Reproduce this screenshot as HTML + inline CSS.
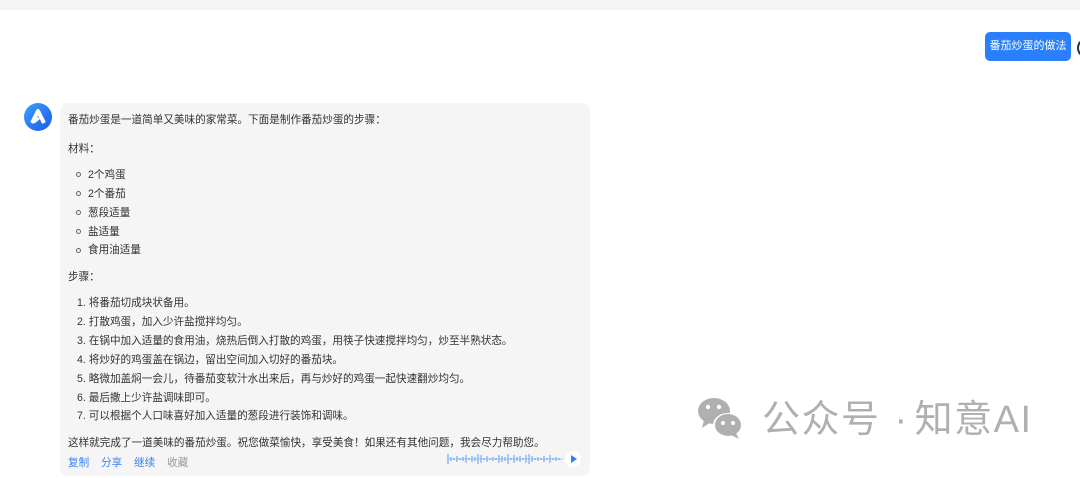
<!DOCTYPE html>
<html><head><meta charset="utf-8"><style>
body{margin:0;width:1080px;height:478px;background:#fff;position:relative;overflow:hidden;font-family:"Liberation Sans","Noto Sans CJK SC",sans-serif;color:#333}
.top{position:absolute;left:0;top:0;width:1080px;height:10px;background:#f5f5f5}
.ub{position:absolute;left:985px;top:32px;width:86px;height:29px;background:#2a7ffc;border-radius:5px;color:#fff;font-size:11px;line-height:29px;text-align:center}
.ua{position:absolute;left:1077px;top:38px;width:16px;height:16px;border-radius:50%;border:2px solid #234}
.av{position:absolute;left:24px;top:103px;width:28px;height:28px;border-radius:50%;background:linear-gradient(135deg,#3aa0ff,#1a5ae8)}
.bb{position:absolute;left:60px;top:103px;width:530px;height:373px;background:#f5f5f5;border-radius:8px}
.t{position:absolute;font-size:10.6px;line-height:14px;white-space:nowrap;margin-top:2px}
.c{position:absolute;width:3px;height:3px;border:1px solid #666;border-radius:50%;margin-top:1px}
.wm{position:absolute;left:762px;top:396px;font-size:38px;color:#b0b0b0;line-height:48px;white-space:nowrap;letter-spacing:1.5px}
</style></head><body>
<div class="top"></div>
<div class="ub">番茄炒蛋的做法</div>
<div class="ua"></div>
<div class="av"><svg width="28" height="28" viewBox="0 0 28 28"><path d="M8 20 L14 8 L20 20" stroke="#fff" stroke-width="4" fill="none" stroke-linejoin="round"/><path d="M10 19 L15 15" stroke="#fff" stroke-width="3"/></svg></div>
<div class="bb"></div>
<div class="t" style="left:68px;top:111px">番茄炒蛋是一道简单又美味的家常菜。下面是制作番茄炒蛋的步骤：</div>
<div class="t" style="left:68px;top:140px">材料：</div>
<div class="c" style="left:76px;top:171px"></div><div class="t" style="left:88px;top:166px">2个鸡蛋</div>
<div class="c" style="left:76px;top:190px"></div><div class="t" style="left:88px;top:185px">2个番茄</div>
<div class="c" style="left:76px;top:209px"></div><div class="t" style="left:88px;top:204px">葱段适量</div>
<div class="c" style="left:76px;top:228px"></div><div class="t" style="left:88px;top:223px">盐适量</div>
<div class="c" style="left:76px;top:247px"></div><div class="t" style="left:88px;top:241px">食用油适量</div>
<div class="t" style="left:68px;top:268px">步骤：</div>
<div class="t" style="left:77px;top:294px">1. 将番茄切成块状备用。</div>
<div class="t" style="left:77px;top:313px">2. 打散鸡蛋，加入少许盐搅拌均匀。</div>
<div class="t" style="left:77px;top:332px">3. 在锅中加入适量的食用油，烧热后倒入打散的鸡蛋，用筷子快速搅拌均匀，炒至半熟状态。</div>
<div class="t" style="left:77px;top:351px">4. 将炒好的鸡蛋盖在锅边，留出空间加入切好的番茄块。</div>
<div class="t" style="left:77px;top:370px">5. 略微加盖焖一会儿，待番茄变软汁水出来后，再与炒好的鸡蛋一起快速翻炒均匀。</div>
<div class="t" style="left:77px;top:389px">6. 最后撒上少许盐调味即可。</div>
<div class="t" style="left:77px;top:407px">7. 可以根据个人口味喜好加入适量的葱段进行装饰和调味。</div>
<div class="t" style="left:68px;top:434px">这样就完成了一道美味的番茄炒蛋。祝您做菜愉快，享受美食！如果还有其他问题，我会尽力帮助您。</div>
<div class="t" style="left:68px;top:454px;color:#3b82f6">复制</div>
<div class="t" style="left:101px;top:454px;color:#3b82f6">分享</div>
<div class="t" style="left:134px;top:454px;color:#3b82f6">继续</div>
<div class="t" style="left:167px;top:454px;color:#999">收藏</div>
<svg style="position:absolute;left:447px;top:452px" width="120" height="14"><g stroke="#5b9cf5" stroke-width="1"><path d="M1 2V12M4 5V9M7 6V8M10 4V10M13 6V8M16 5V9M19 3V11M22 6V8M25 4V10M28 5V9M31 2V12M34 3V11M37 6V8M40 4V10M43 6V8M46 5V9M49 6V8M52 3V11M55 4V10M58 5V9M61 2V12M64 6V8M67 3V11M70 5V9M73 4V10M76 6V8M79 3V11M82 2V12M85 4V10M88 6V8M91 5V9M94 6V8M97 4V10M100 6V8M103 3V11M106 6V8M109 5V9M112 6V8M115 7V7"/></g><path d="M0 7H116" stroke="#5b9cf5" stroke-width=".6"/></svg>
<div style="position:absolute;left:565px;top:451px;width:16px;height:16px;border-radius:50%;background:#fff"></div>
<svg style="position:absolute;left:570px;top:455px" width="8" height="8"><path d="M1 0L7 4L1 8Z" fill="#2a7ffc"/></svg>
<svg style="position:absolute;left:696px;top:394px" width="50" height="48" viewBox="0 0 50 48"><ellipse cx="18" cy="17" rx="16" ry="13" fill="#b0b0b0"/><path d="M8 26 L6 34 L15 28Z" fill="#b0b0b0"/><ellipse cx="32" cy="31" rx="15" ry="12" fill="#fff"/><ellipse cx="32" cy="31" rx="13" ry="11" fill="#b0b0b0"/><path d="M40 39 L43 45 L35 41Z" fill="#b0b0b0"/><circle cx="12" cy="13" r="2.2" fill="#fff"/><circle cx="23" cy="13" r="2.2" fill="#fff"/><circle cx="27" cy="29" r="2" fill="#fff"/><circle cx="37" cy="29" r="2" fill="#fff"/></svg>
<div class="wm">公众号<span style="margin:0 6px 0 14px">·</span>知意AI</div>
</body></html>
